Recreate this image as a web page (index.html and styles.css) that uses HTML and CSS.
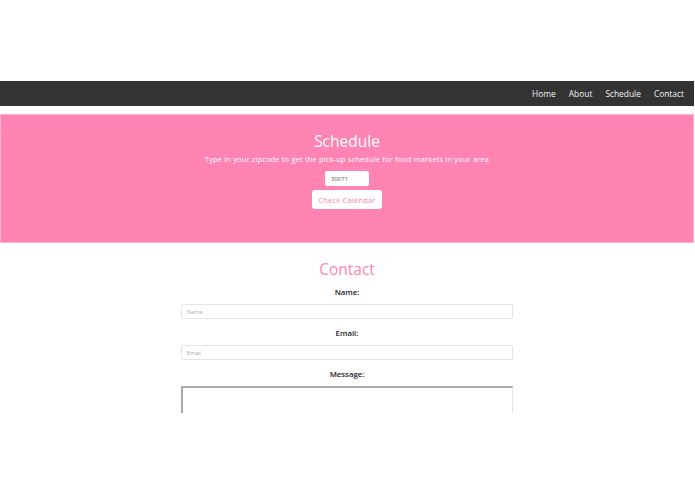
FILE: index.html
```html
<!DOCTYPE html>
<html>
<head>
<meta charset="utf-8">
<link rel="stylesheet" href="styles.css">
</head>
<body>
<div class="page">
  <div class="top-space"></div>
  <nav class="navbar">
    <a href="#">Home</a>
    <a href="#">About</a>
    <a href="#">Schedule</a>
    <a href="#">Contact</a>
  </nav>
  <section class="schedule">
    <h2 class="schedule-title">Schedule</h2>
    <p class="schedule-text">Type in your zipcode to get the pick-up schedule for food markets in your area</p>
    <input class="zip" type="text" value="30071">
    <button class="check">Check Calendar</button>
  </section>
  <section class="contact">
    <h2 class="contact-title">Contact</h2>
    <label class="field-label">Name:</label>
    <input class="field" type="text" placeholder="Name">
    <label class="field-label">Email:</label>
    <input class="field" type="text" placeholder="Email">
    <label class="field-label">Message:</label>
    <textarea class="message"></textarea>
  </section>
</div>
</body>
</html>
```
FILE: styles.css
```css
* { box-sizing: border-box; }
html, body { margin: 0; padding: 0; background: #fff; }
body { font-family: "Open Sans", "Noto Sans", sans-serif; width: 695px; height: 494px; overflow: hidden; }
.page { width: 694px; }
.top-space { height: 81px; }
.navbar {
  height: 25px;
  background: #333333;
  display: flex;
  justify-content: flex-end;
  align-items: center;
  gap: 13px;
  padding-right: 10px;
}
.navbar a { color: #f4f4f4; text-decoration: none; font-size: 8.4px; }
.schedule {
  margin-top: 8px;
  height: 129px;
  background: #ff84b3;
  border: 1px solid #ffb0cf;
  display: flex;
  flex-direction: column;
  align-items: center;
  padding-top: 16px;
}
.schedule-title { margin: 0; font-weight: 400; font-size: 15.5px; color: #fff; line-height: 20px; }
.schedule-text { margin: 3px 0 0; font-size: 7.4px; color: #fff; line-height: 10px; letter-spacing: 0.2px; }
.zip {
  margin-top: 7px;
  width: 44px; height: 15px; flex: none;
  border: none; border-radius: 2px;
  font-family: inherit; font-size: 6px; color: #555;
  padding: 0 6px;
}
.check {
  margin-top: 4px;
  width: 70px; height: 19px; flex: none;
  background: #fff; border: none; border-radius: 3px;
  color: #ff84b3; font-family: inherit; font-size: 7.5px; letter-spacing: 0.2px;
  padding: 0;
}
.contact {
  height: 170px;
  overflow: hidden;
  display: flex;
  flex-direction: column;
  align-items: center;
  padding-top: 15px;
}
.contact-title { margin: 0; font-weight: 400; font-size: 15.5px; color: #ff84b3; line-height: 22px; flex: none; }
.field-label { font-weight: 600; font-size: 7.8px; color: #222; margin-top: 7px; line-height: 10px; flex: none; }
.field {
  margin-top: 7px; margin-bottom: 2px;
  width: 332px; height: 15px; flex: none;
  border: 1px solid #e4e4e4; border-radius: 2px;
  font-family: inherit; font-size: 5.5px; padding: 0 5px;
}
.field::placeholder { color: #aaa; }
.message {
  margin-top: 7px;
  width: 332px; height: 40px; flex: none;
  border: 1px solid #e4e4e4; border-top: 2px solid #aaa; border-left: 2px solid #aaa;
  resize: none;
}
```
